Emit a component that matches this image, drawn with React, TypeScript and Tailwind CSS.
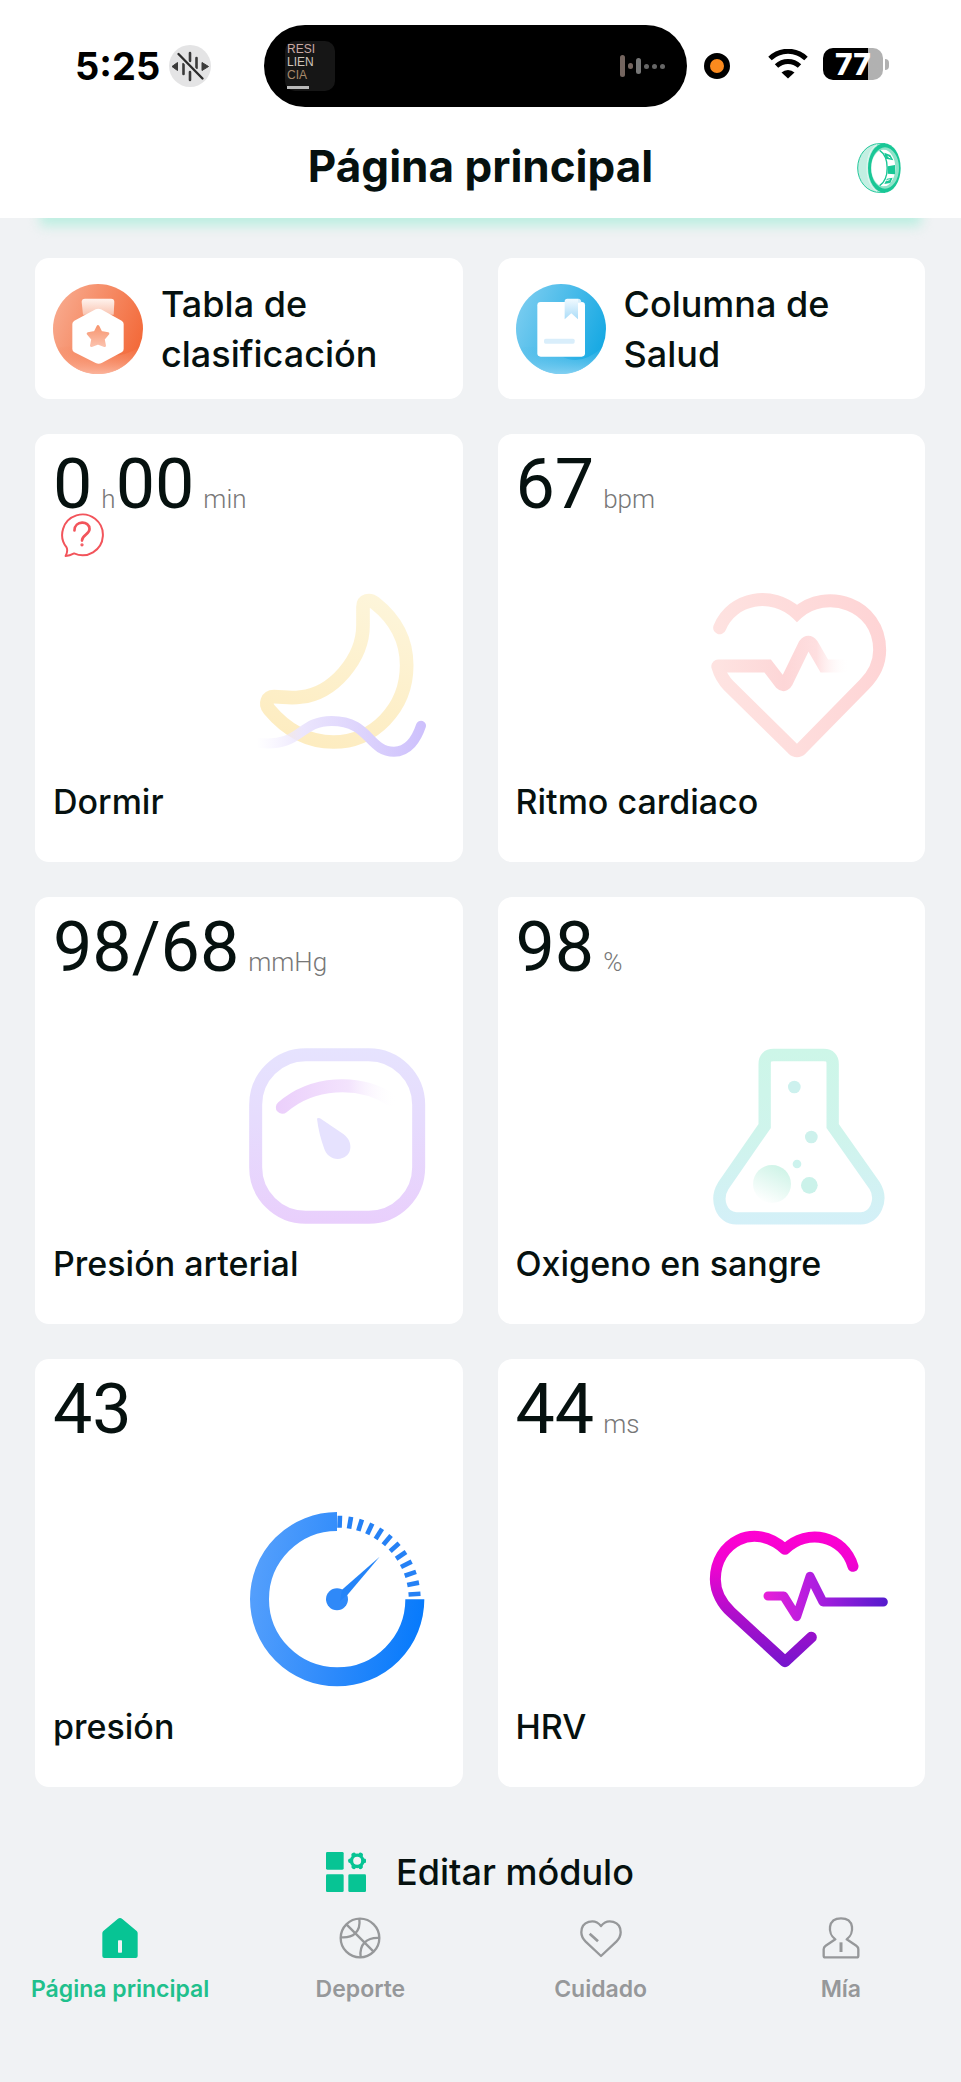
import type { ReactNode } from "react";

const ICON_BOX = "mt-auto mr-5 size-44 self-end overflow-visible";

function MutedIcon() {
  return (
    <svg viewBox="0 0 42 42" className="size-[42px]" aria-hidden="true">
      <circle cx="21" cy="21" r="21" fill="#e4e4e5" />
      <g stroke="#3a3a3a" strokeWidth="2.6" strokeLinecap="round">
        <path d="M14.5 19v10M21 8v8M21 27v8M27.500 13v10" />
      </g>
      <path d="M9.500 9.500 33 33" stroke="#e4e4e5" strokeWidth="5" />
      <path d="M9.500 9 33.500 33.500" stroke="#2c2c2c" strokeWidth="2.400" strokeLinecap="round" />
      <path d="M3 21.500 8.500 17.500v8zM39.500 21.500 33 17.500v8z" fill="#3a3a3a" stroke="#3a3a3a" strokeLinejoin="round" />
    </svg>
  );
}

function WifiIcon() {
  return (
    <svg viewBox="0 0 40 30" className="h-[30px] w-10" aria-hidden="true">
      <path d="M2 9.500A26 26 0 0 1 38 9.500" fill="none" stroke="#000" strokeWidth="5" />
      <path d="M8.500 17A17 17 0 0 1 31.500 17" fill="none" stroke="#000" strokeWidth="5" />
      <path d="M20 29.500 13.500 23.500A9.500 9.500 0 0 1 26.500 23.500Z" fill="#000" />
    </svg>
  );
}

function RingIcon() {
  return (
    <svg viewBox="0 0 132 150" className="h-[50px] w-11" aria-hidden="true">
      <path d="M66 2A64 73 0 0 0 66 148H84V2Z" fill="#c3efe2" stroke="#22c79a" strokeWidth="3" />
      <path d="M60 5C20 25 20 125 60 145" fill="none" stroke="#e3f8f1" strokeWidth="3" />
      <ellipse cx="82" cy="75" rx="49" ry="74" fill="#19c796" />
      <ellipse cx="84" cy="75" rx="42" ry="62" fill="#8fe3c9" />
      <ellipse cx="79" cy="75" rx="36" ry="55" fill="#fff" />
      <path d="M84 20C122 30 122 120 84 130" fill="#fff" />
      <path d="M68 22C98 42 98 108 68 128" fill="none" stroke="#19c796" strokeWidth="4" />
      <path d="M82 29 100 36 109 52 86 47zM92 70 114 66V94L92 92zM90 107 107 104 100 120 82 123z" fill="#19c796" />
      <path d="M92 40l8 5M88 113l10-3" stroke="#fff" strokeWidth="3" />
    </svg>
  );
}

function MedalIcon() {
  return (
    <svg viewBox="0 0 270 270" className="size-[90px] shrink-0" aria-hidden="true">
      <defs>
        <linearGradient id="medalBg" x1="0" y1=".2" x2="1" y2=".6">
          <stop offset="0" stopColor="#f8ab8f" />
          <stop offset="1" stopColor="#f36a3a" />
        </linearGradient>
        <linearGradient id="medalLow" x1="0" y1="0" x2="0" y2="1">
          <stop offset="0" stopColor="#f6875f" stopOpacity=".1" />
          <stop offset="1" stopColor="#fbb49c" />
        </linearGradient>
        <linearGradient id="medalTop" x1="0" y1="0" x2="0" y2="1">
          <stop offset="0" stopColor="#fff3ee" />
          <stop offset="1" stopColor="#f9c5b2" />
        </linearGradient>
        <linearGradient id="medalStar" x1="0" y1="0" x2="0" y2="1">
          <stop offset="0" stopColor="#f79670" />
          <stop offset="1" stopColor="#fbc0ab" />
        </linearGradient>
      </defs>
      <circle cx="135" cy="135" r="135" fill="url(#medalBg)" />
      <path d="M12 191Q80 180 135 205T258 191A135 135 0 0 1 12 191Z" fill="url(#medalLow)" />
      <path d="M96 44h78q10 0 10 10l-2 38H90l-4-38q0-10 10-10Z" fill="url(#medalTop)" />
      <path d="M128 76q8-4 16 0l62 34q6 4 6 10v75q0 7-6 10l-60 32q-9 5-18 0l-64-32q-6-3-6-10v-75q0-6 6-10Z" fill="#fff" />
      <path
        d="m135 127 9 18 21 4-14 16 4 20-20-7-20 7 4-20-14-16 21-4z"
        fill="url(#medalStar)"
        stroke="url(#medalStar)"
        strokeWidth="8"
        strokeLinejoin="round"
      />
    </svg>
  );
}

function BookIcon() {
  return (
    <svg viewBox="0 0 270 270" className="size-[90px] shrink-0" aria-hidden="true">
      <defs>
        <linearGradient id="bookBg" x1="0" y1=".2" x2="1" y2=".6">
          <stop offset="0" stopColor="#7ccdf0" />
          <stop offset="1" stopColor="#17a9e3" />
        </linearGradient>
        <linearGradient id="bookLow" x1="0" y1="0" x2="0" y2="1">
          <stop offset="0" stopColor="#4cbbe9" stopOpacity=".1" />
          <stop offset="1" stopColor="#83d0f2" />
        </linearGradient>
        <linearGradient id="bookMark" x1="0" y1="0" x2="0" y2="1">
          <stop offset="0" stopColor="#f2faff" />
          <stop offset="1" stopColor="#a9dcf8" />
        </linearGradient>
      </defs>
      <circle cx="135" cy="135" r="135" fill="url(#bookBg)" />
      <path d="M12 191Q80 180 135 215T258 191A135 135 0 0 1 12 191Z" fill="url(#bookLow)" />
      <rect x="64" y="54" width="143" height="164" rx="10" fill="#fff" />
      <path d="M146 52q0-8 8-8h32v62l-20-18-20 18z" fill="url(#bookMark)" />
      <path d="M186 44q10 0 10 12h-10z" fill="#d7effc" />
      <rect x="84" y="164" width="92" height="15" rx="5" fill="#d9eefb" />
    </svg>
  );
}

function QuestionBubble() {
  return (
    <svg viewBox="0 0 132 134" className="size-11" fill="none" stroke="#f2545b" strokeWidth="6" strokeLinecap="round" strokeLinejoin="round" aria-hidden="true">
      <path d="M19 105A62 62 0 1 1 42 123Q28 130 16 131Q24 117 19 105Z" />
      <path d="M43 53C43 22 89 22 89 49C89 66 66 66 66 84" strokeWidth="8" />
      <circle cx="66" cy="97" r="2" />
    </svg>
  );
}

function MoonArt() {
  return (
    <svg viewBox="57 72 528 528" className={ICON_BOX} fill="none" strokeLinecap="round" strokeLinejoin="round" aria-hidden="true">
      <defs>
        <linearGradient id="moon" gradientUnits="userSpaceOnUse" x1="420" y1="95" x2="280" y2="560">
          <stop offset="0" stopColor="#fdf5da" />
          <stop offset="1" stopColor="#fdecc0" />
        </linearGradient>
        <linearGradient id="wave" gradientUnits="userSpaceOnUse" x1="80" y1="0" x2="585" y2="0">
          <stop offset="0" stopColor="#f0ebff" stopOpacity="0" />
          <stop offset=".28" stopColor="#ebe5fd" />
          <stop offset="1" stopColor="#cdc0fc" />
        </linearGradient>
      </defs>
      <path d="M399 135C399 115 418 109 436 124C494 170 530 233 530 310C530 440 430 540 310 540C230 540 170 505 118 443C103 425 112 404 132 404C160 404 180 410 212 405C310 395 399 290 399 190Z" stroke="url(#moon)" strokeWidth="41" />
      <path d="M88 543C215 556 205 477 305 477C420 477 415 569 492 569C535 569 560 530 573 491" stroke="url(#wave)" strokeWidth="30" />
    </svg>
  );
}

function HeartRateArt() {
  return (
    <svg viewBox="96 72 528 528" className={ICON_BOX} fill="none" strokeLinecap="round" aria-hidden="true">
      <defs>
        <linearGradient id="heart" gradientUnits="userSpaceOnUse" x1="100" y1="300" x2="620" y2="220">
          <stop offset="0" stopColor="#fee3e1" />
          <stop offset="1" stopColor="#fed4d5" />
        </linearGradient>
        <linearGradient id="pulse" gradientUnits="userSpaceOnUse" x1="120" y1="0" x2="510" y2="0">
          <stop offset="0" stopColor="#fee3e1" />
          <stop offset=".5" stopColor="#fdd6d7" />
          <stop offset=".75" stopColor="#fedfe0" />
          <stop offset="1" stopColor="#fff" stopOpacity="0" />
        </linearGradient>
      </defs>
      <path d="M122 197C160 105 280 85 354 154C440 75 602 125 602 264C602 310 583 340 556 367L367 560Q354 572 341 560L150 372Q126 347 117 315" stroke="url(#heart)" strokeWidth="39" />
      <path d="M117 312H266L306 364Q315 373 322 361L377 248Q388 234 399 248L436 312H500" stroke="url(#pulse)" strokeWidth="39" />
    </svg>
  );
}

function PressureArt() {
  return (
    <svg viewBox="57 84 528 528" className={ICON_BOX} fill="none" strokeLinecap="round" aria-hidden="true">
      <defs>
        <linearGradient id="frame" gradientUnits="userSpaceOnUse" x1="0" y1="84" x2="0" y2="612">
          <stop offset="0" stopColor="#e6e3fe" />
          <stop offset=".4" stopColor="#e6dcfd" />
          <stop offset="1" stopColor="#e9cffc" />
        </linearGradient>
        <linearGradient id="dial" gradientUnits="userSpaceOnUse" x1="140" y1="0" x2="500" y2="0">
          <stop offset="0" stopColor="#ebcffb" />
          <stop offset=".6" stopColor="#f3e3fd" />
          <stop offset="1" stopColor="#fff" stopOpacity="0" />
        </linearGradient>
      </defs>
      <rect x="77" y="104" width="489" height="488" rx="150" stroke="url(#frame)" strokeWidth="39" />
      <path d="M157 262C245 185 385 175 485 240" stroke="url(#dial)" strokeWidth="39" />
      <path d="M261 296Q263 292 270 295L341 343C374 368 366 416 323 417C304 417 289 404 283 387Q266 340 261 296Z" fill="#e6e2fe" />
    </svg>
  );
}

function FlaskArt() {
  return (
    <svg viewBox="96 84 528 528" className={ICON_BOX} aria-hidden="true">
      <defs>
        <linearGradient id="flask" gradientUnits="userSpaceOnUse" x1="0" y1="84" x2="0" y2="612">
          <stop offset="0" stopColor="#cdf6e8" />
          <stop offset=".5" stopColor="#cff4ec" />
          <stop offset="1" stopColor="#d4f0f8" />
        </linearGradient>
        <linearGradient id="bubble" x1=".8" y1="0" x2=".3" y2="1">
          <stop offset="0" stopColor="#ccf3e6" />
          <stop offset="1" stopColor="#fff" />
        </linearGradient>
      </defs>
      <path d="M257 318V132Q257 105 284 105H434Q461 105 461 132V318L587 497C613 540 588 595 545 595H172C128 595 107 540 133 497Z" fill="none" stroke="url(#flask)" strokeWidth="37" />
      <circle cx="346" cy="201" r="19" fill="#cdf1ee" />
      <circle cx="397" cy="351" r="19" fill="#cdf1ec" />
      <circle cx="354" cy="432" r="13" fill="#cdf3ee" />
      <circle cx="391" cy="496" r="25" fill="#cbf2ea" />
      <circle cx="279" cy="492" r="57" fill="url(#bubble)" />
    </svg>
  );
}

const TICKS = Array.from({ length: 12 }, (_, i) => 2 + i * 7.65);

function GaugeArt() {
  return (
    <svg viewBox="57 90 528 528" className={ICON_BOX} aria-hidden="true">
      <defs>
        <linearGradient id="gauge" gradientUnits="userSpaceOnUse" x1="60" y1="340" x2="585" y2="420">
          <stop offset="0" stopColor="#549ffc" />
          <stop offset=".5" stopColor="#2f8bfb" />
          <stop offset="1" stopColor="#067afc" />
        </linearGradient>
      </defs>
      <path d="M321 121.500A233 233 0 1 0 554.500 355" fill="none" stroke="url(#gauge)" strokeWidth="57" />
      {TICKS.map((angle) => (
        <rect key={angle} x="314" y="104" width="14" height="36" fill="#2581f5" transform={`rotate(${angle} 321 355)`} />
      ))}
      <circle cx="321" cy="355" r="33" fill="#2f89f8" />
      <path d="M336 326 449 227 354 340 330 360Z" fill="#2484f8" />
    </svg>
  );
}

function HrvArt() {
  return (
    <svg viewBox="96 90 528 528" className={ICON_BOX} fill="none" strokeLinecap="round" strokeLinejoin="round" aria-hidden="true">
      <defs>
        <linearGradient id="hrv" gradientUnits="userSpaceOnUse" x1="0" y1="150" x2="0" y2="560">
          <stop offset="0" stopColor="#ff00d2" />
          <stop offset=".25" stopColor="#ef04d0" />
          <stop offset=".65" stopColor="#a80fcb" />
          <stop offset="1" stopColor="#7415cd" />
        </linearGradient>
        <linearGradient id="beat" gradientUnits="userSpaceOnUse" x1="255" y1="0" x2="625" y2="0">
          <stop offset="0" stopColor="#e81fd8" />
          <stop offset=".4" stopColor="#b01ee0" />
          <stop offset="1" stopColor="#541bcd" />
        </linearGradient>
      </defs>
      <path d="M522 256C494 163 385 140 318 205C225 120 109 185 109 295C109 334 131 370 156 393L318 542 397 469" stroke="url(#hrv)" strokeWidth="33" />
      <path d="M267 345H314L353 407 393 286 432 363H613" stroke="url(#beat)" strokeWidth="27" />
    </svg>
  );
}

function ModulesIcon() {
  return (
    <svg viewBox="0 0 120 120" className="size-10" fill="#07c494" aria-hidden="true">
      <rect width="53" height="53" rx="4" />
      <rect y="67" width="53" height="53" rx="4" />
      <rect x="67" y="67" width="53" height="53" rx="4" />
      <circle cx="93.500" cy="26.500" r="17" fill="none" stroke="#07c494" strokeWidth="10" />
      {[0, 60, 120, 180, 240, 300].map((a) => (
        <circle key={a} cx="114" cy="26.500" r="7" transform={`rotate(${a} 93.500 26.500)`} />
      ))}
    </svg>
  );
}

function HomeIcon() {
  return (
    <svg viewBox="0 0 126 126" className="size-[42px]" aria-hidden="true">
      <path d="M56 6q7-6 14 0l43 36q3 3 3 7v68q0 6-6 6H16q-6 0-6-6V49q0-4 3-7Z" fill="#07c494" />
      <rect x="57" y="70" width="12" height="37" rx="2" fill="#f0f2f4" />
    </svg>
  );
}

function BallIcon() {
  return (
    <svg viewBox="0 0 126 126" className="size-[42px]" fill="none" stroke="currentColor" strokeWidth="7" aria-hidden="true">
      <circle cx="63" cy="63" r="58" />
      <path d="M23 23 103 103M61 5C66 45 42 64 5 61M65 121C60 81 84 61 121 63" />
    </svg>
  );
}

function CareIcon() {
  return (
    <svg viewBox="0 0 126 126" className="size-[42px]" fill="none" stroke="currentColor" strokeWidth="7" strokeLinejoin="round" aria-hidden="true">
      <path d="M63 27C43 2 4 13 4 46C4 60 10 67 17 74L63 117 109 74C116 67 122 60 122 46C122 13 83 2 63 27Z" />
      <path d="M29 50 54 73" strokeWidth="8" />
    </svg>
  );
}

function PersonIcon() {
  return (
    <svg viewBox="0 0 126 126" className="size-[42px]" fill="none" stroke="currentColor" strokeWidth="7" strokeLinejoin="round" aria-hidden="true">
      <path d="M46 67C22 50 22 4 63 4C104 4 104 50 80 67L109 86Q115 90 115 97V116Q115 121 110 121H16Q11 121 11 116V97Q11 90 17 86Z" />
      <path d="M63 76V105" strokeWidth="9" />
    </svg>
  );
}

function StatusBar() {
  return (
    <div className="flex items-center pt-[25px]">
      <div className="flex flex-1 items-center gap-[9px] pl-[75px]">
        <time className="text-[38px] leading-[44px] font-bold text-black">5:25</time>
        <MutedIcon />
      </div>
      <div className="flex h-[82px] w-[423px] shrink-0 items-center justify-between rounded-full bg-black pr-[22px] pl-[21px]">
        <div className="flex size-[50px] flex-col rounded-[10px] bg-[#161616] pt-[2px] pl-[2px] font-['Liberation_Sans_Narrow','Liberation_Sans',sans-serif] text-[12px] leading-[13px] text-[#cfc4bb]">
          <span className="text-[#c9a9a4]">RESI</span>
          <span>LIEN</span>
          <span className="text-[#a98a6b]">CIA</span>
          <span className="mt-1 h-[3px] w-[22px] bg-[#b9b9b9]" />
        </div>
        <div className="flex items-center gap-[3px]">
          <span className="h-[22px] w-[5px] rounded-full bg-[#74655f]" />
          <span className="h-[6px] w-[5px] rounded-full bg-[#74655f]" />
          <span className="h-[16px] w-[5px] rounded-full bg-[#777]" />
          <span className="size-[5px] rounded-full bg-[#666]" />
          <span className="size-[5px] rounded-full bg-[#666]" />
          <span className="size-[5px] rounded-full bg-[#666]" />
        </div>
      </div>
      <div className="flex w-[274px] shrink-0 items-center pl-[17px]">
        <span className="size-[26px] rounded-full border-[6px] border-black bg-[#fb8a1e]" />
        <div className="ml-[38px] flex items-center gap-[15px] pb-1">
          <WifiIcon />
          <div className="flex items-center gap-[2px]">
            <div className="flex h-8 w-[60px] items-center justify-center rounded-[10px] bg-linear-to-r from-black from-75% to-[#b1b1b1] to-75% text-[30px] leading-8 font-extrabold text-white">
              77
            </div>
            <span className="h-[11px] w-1 rounded-r-full bg-[#b1b1b1]" />
          </div>
        </div>
      </div>
    </div>
  );
}

function Shortcut({ icon, children }: { icon: ReactNode; children: ReactNode }) {
  return (
    <button type="button" className="flex min-h-[141px] items-center gap-[18px] rounded-[14px] bg-white px-[18px] text-left text-[36px] leading-[50px] font-medium">
      {icon}
      <span>{children}</span>
    </button>
  );
}

type Part = { value: string; unit?: string };

function MetricCard({ parts, label, art, hint }: { parts: Part[]; label: string; art: ReactNode; hint?: boolean }) {
  return (
    <article className="relative flex aspect-square flex-col rounded-[14px] bg-white px-[18px] pt-[9px] pb-[35px]">
      <p className="flex items-baseline font-['Roboto',sans-serif] text-[70px] leading-[82px]">
        {parts.map(({ value, unit }) => (
          <span key={value}>
            {value}
            {unit && <span className="ml-[9px] text-[26px] font-light text-[#777]">{unit}</span>}
          </span>
        ))}
      </p>
      {hint && (
        <button type="button" aria-label="Ayuda" className="absolute top-[79px] left-[25px]">
          <QuestionBubble />
        </button>
      )}
      {art}
      <h2 className="mt-[15px] text-[34px] leading-[50px] font-medium">{label}</h2>
    </article>
  );
}

const TABS = [
  { label: "Página principal", icon: <HomeIcon />, active: true },
  { label: "Deporte", icon: <BallIcon />, active: false },
  { label: "Cuidado", icon: <CareIcon />, active: false },
  { label: "Mía", icon: <PersonIcon />, active: false },
];

export default function App() {
  return (
    <div className="flex min-h-screen flex-col bg-[#f0f2f4] font-['Inter','Liberation_Sans',sans-serif] text-[#06110f]">
      <header className="bg-white">
        <StatusBar />
        <div className="grid grid-cols-[1fr_auto_1fr] items-center pt-[11px]">
          <h1 className="col-start-2 pb-1 text-[44px] leading-[96px] font-bold">Página principal</h1>
          <button type="button" aria-label="Anillo" className="mr-[60px] justify-self-end">
            <RingIcon />
          </button>
        </div>
      </header>

      <main className="relative overflow-hidden pt-10 pr-9 pl-[35px]">
        <div className="absolute inset-x-10 -top-3 h-5 bg-[#bdeee1] blur-[6px]" />
        <div className="grid grid-cols-2 gap-[35px]">
          <Shortcut icon={<MedalIcon />}>
            Tabla de
            <br />
            clasificación
          </Shortcut>
          <Shortcut icon={<BookIcon />}>
            Columna de
            <br />
            Salud
          </Shortcut>
          <MetricCard parts={[{ value: "0", unit: "h" }, { value: "00", unit: "min" }]} label="Dormir" art={<MoonArt />} hint />
          <MetricCard parts={[{ value: "67", unit: "bpm" }]} label="Ritmo cardiaco" art={<HeartRateArt />} />
          <MetricCard parts={[{ value: "98/68", unit: "mmHg" }]} label="Presión arterial" art={<PressureArt />} />
          <MetricCard parts={[{ value: "98", unit: "%" }]} label="Oxigeno en sangre" art={<FlaskArt />} />
          <MetricCard parts={[{ value: "43" }]} label="presión" art={<GaugeArt />} />
          <MetricCard parts={[{ value: "44", unit: "ms" }]} label="HRV" art={<HrvArt />} />
        </div>
        <div className="flex justify-center pt-[60px]">
          <button type="button" className="flex items-center gap-[30px] text-[36px] leading-[50px] font-medium">
            <ModulesIcon />
            Editar módulo
          </button>
        </div>
      </main>

      <nav className="grid grid-cols-4 pt-5">
        {TABS.map(({ label, icon, active }) => (
          <a
            key={label}
            href="#"
            aria-current={active ? "page" : undefined}
            className={
              active
                ? "flex flex-col items-center gap-[15px] text-[23px] leading-[30px] font-semibold text-[#1fc08c]"
                : "flex flex-col items-center gap-[15px] text-[23px] leading-[30px] font-semibold text-[#96989a]"
            }
          >
            {icon}
            {label}
          </a>
        ))}
      </nav>
    </div>
  );
}
